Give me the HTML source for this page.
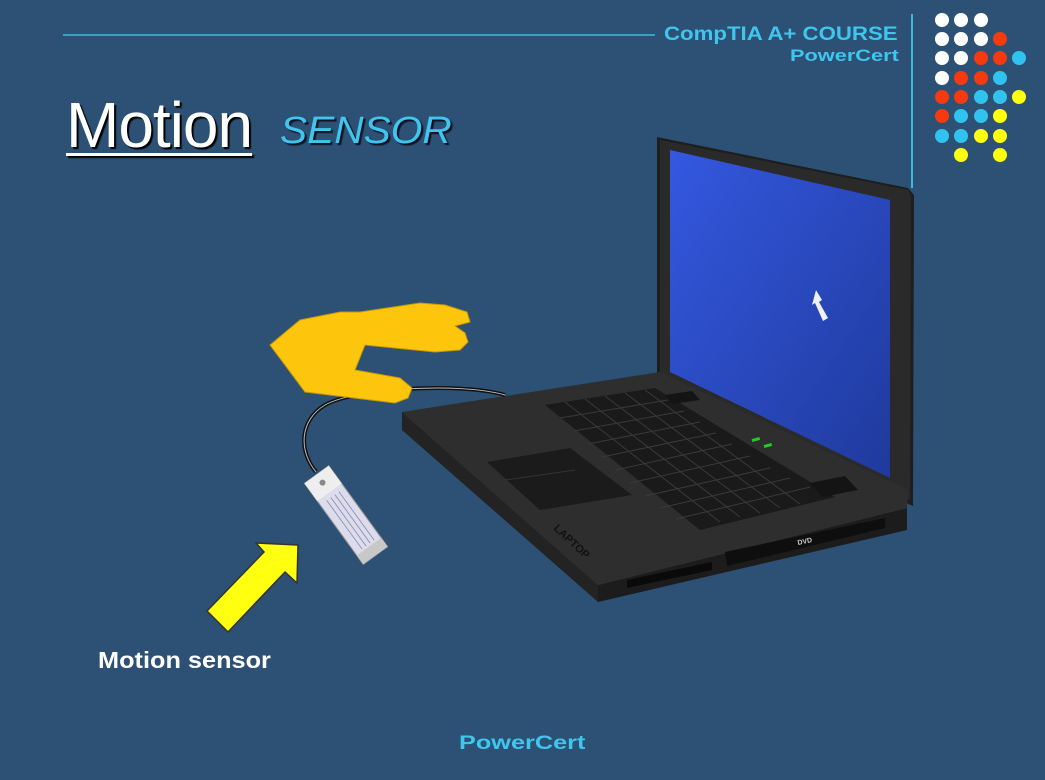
<!DOCTYPE html>
<html><head><meta charset="utf-8"><style>
html,body{margin:0;padding:0;}
body{width:1045px;height:780px;background:#2c5175;overflow:hidden;position:relative;font-family:"Liberation Sans",sans-serif;}
.t{position:absolute;white-space:nowrap;transform-origin:0 0;}
</style></head><body>
<svg width="1045" height="780" style="position:absolute;left:0;top:0">
<line x1="63" y1="35" x2="655" y2="35" stroke="#3fb8e0" stroke-width="1.5"/>
<line x1="912" y1="14" x2="912" y2="188" stroke="#3fb8e0" stroke-width="2"/>
<g>
<circle cx="942" cy="20" r="7" fill="#fff"/><circle cx="961" cy="20" r="7" fill="#fff"/><circle cx="981" cy="20" r="7" fill="#fff"/>
<circle cx="942" cy="39" r="7" fill="#fff"/><circle cx="961" cy="39" r="7" fill="#fff"/><circle cx="981" cy="39" r="7" fill="#fff"/><circle cx="1000" cy="39" r="7" fill="#f53a10"/>
<circle cx="942" cy="58" r="7" fill="#fff"/><circle cx="961" cy="58" r="7" fill="#fff"/><circle cx="981" cy="58" r="7" fill="#f53a10"/><circle cx="1000" cy="58" r="7" fill="#f53a10"/><circle cx="1019" cy="58" r="7" fill="#31c3ef"/>
<circle cx="942" cy="78" r="7" fill="#fff"/><circle cx="961" cy="78" r="7" fill="#f53a10"/><circle cx="981" cy="78" r="7" fill="#f53a10"/><circle cx="1000" cy="78" r="7" fill="#31c3ef"/>
<circle cx="942" cy="97" r="7" fill="#f53a10"/><circle cx="961" cy="97" r="7" fill="#f53a10"/><circle cx="981" cy="97" r="7" fill="#31c3ef"/><circle cx="1000" cy="97" r="7" fill="#31c3ef"/><circle cx="1019" cy="97" r="7" fill="#ffff10"/>
<circle cx="942" cy="116" r="7" fill="#f53a10"/><circle cx="961" cy="116" r="7" fill="#31c3ef"/><circle cx="981" cy="116" r="7" fill="#31c3ef"/><circle cx="1000" cy="116" r="7" fill="#ffff10"/>
<circle cx="942" cy="136" r="7" fill="#31c3ef"/><circle cx="961" cy="136" r="7" fill="#31c3ef"/><circle cx="981" cy="136" r="7" fill="#ffff10"/><circle cx="1000" cy="136" r="7" fill="#ffff10"/>
<circle cx="961" cy="155" r="7" fill="#ffff10"/><circle cx="1000" cy="155" r="7" fill="#ffff10"/>
</g>
<polygon points="657,137 908,188 914,195 913,506 657,392" fill="#1e1e1e"/>
<polygon points="660,140 908,190 911,196 910,500 660,390" fill="#2a2a2a"/>
<defs><linearGradient id="sg" x1="0" y1="0" x2="1" y2="1"><stop offset="0" stop-color="#3458e0"/><stop offset="1" stop-color="#1f3a9c"/></linearGradient></defs>
<polygon points="670,150 890,200 890,478 670,372" fill="url(#sg)"/>
<polygon points="816,290 822,300 819,302 828,318 823,321 815,303 812,305" fill="#f0f0f0"/>
<polygon points="402,412 598,585 598,602 402,430" fill="#232323"/>
<polygon points="598,585 907,508 907,530 598,602" fill="#1c1c1c"/>
<polygon points="402,412 660,372 908,490 907,508 598,585" fill="#2e2e2e"/>
<polygon points="545,405 655,388 835,497 700,530" fill="#1a1a1a"/>
<g stroke="#3a3a3a" stroke-width="1">
<line x1="560" y1="418" x2="668" y2="400"/><line x1="574" y1="431" x2="684" y2="411"/><line x1="588" y1="444" x2="700" y2="422"/><line x1="602" y1="457" x2="716" y2="433"/><line x1="616" y1="470" x2="732" y2="444"/><line x1="630" y1="483" x2="750" y2="456"/><line x1="645" y1="496" x2="770" y2="468"/><line x1="660" y1="508" x2="790" y2="478"/><line x1="676" y1="519" x2="810" y2="487"/>
<line x1="565" y1="402" x2="720" y2="522"/><line x1="585" y1="399" x2="740" y2="517"/><line x1="605" y1="396" x2="760" y2="513"/><line x1="625" y1="393" x2="780" y2="508"/><line x1="645" y1="390" x2="800" y2="504"/>
</g>
<polygon points="487,462 570,448 632,495 540,510" fill="#1b1b1b"/>
<line x1="505" y1="480" x2="575" y2="470" stroke="#333"/>
<polygon points="665,395 692,391 700,400 672,404" fill="#141414"/>
<polygon points="810,483 845,476 858,490 822,497" fill="#141414"/>
<rect x="752" y="438" width="8" height="3" fill="#22cc22" transform="rotate(-15 756 440)"/>
<rect x="764" y="444" width="8" height="3" fill="#22cc22" transform="rotate(-15 768 446)"/>
<polygon points="725,552 885,518 885,528 727,566" fill="#0e0e0e"/>
<polygon points="627,580 712,562 712,570 627,588" fill="#0a0a0a"/>
<text x="798" y="545" font-size="7" fill="#ccc" font-weight="bold" transform="rotate(-12 798 545)">DVD</text>
<text x="553" y="529" font-size="11" font-weight="bold" fill="#111" transform="rotate(43 553 529)">LAPTOP</text>
<path d="M316,472 C298,450 300,420 325,405 C355,388 460,382 505,395" stroke="#111" stroke-width="4" fill="none"/>
<path d="M316,472 C298,450 300,420 325,405 C355,388 460,382 505,395" stroke="#bbb" stroke-width="1" fill="none"/>
<g transform="rotate(-36 346 515)">
<rect x="331" y="465" width="30" height="100" fill="#dcdcec" stroke="#999"/>
<rect x="331" y="465" width="30" height="22" fill="#eee"/>
<circle cx="346" cy="475" r="3" fill="#888"/>
<g stroke="#8888aa" stroke-width="0.8"><line x1="339" y1="492" x2="339" y2="552"/><line x1="344" y1="492" x2="344" y2="552"/><line x1="349" y1="492" x2="349" y2="552"/><line x1="354" y1="492" x2="354" y2="552"/></g>
<rect x="331" y="554" width="30" height="11" fill="#c8c8c8"/>
</g>
<path d="M270,345 L300,320 L340,312 L360,312 L420,303 L445,305 L467,312 L470,322 L455,326 L465,333 L468,342 L460,350 L435,352 L365,345 L355,370 L400,378 L412,388 L408,398 L395,403 L305,392 Z" fill="#fdc50b" stroke="#c89a00" stroke-width="1"/>
<polygon points="298,545 297,583 285,572 228,632 207,611 264,552 256,543" fill="#ffff10" stroke="#333" stroke-width="1.5"/>
</svg>
<div class="t" style="left:664px;top:24px;font-size:19px;font-weight:bold;color:#3fc6ee;transform:scaleX(1.17);">CompTIA A+ COURSE</div>
<div class="t" style="left:790px;top:46px;font-size:17px;font-weight:bold;color:#3fc6ee;transform:scaleX(1.28);">PowerCert</div>
<div class="t" style="left:66px;top:88px;font-size:64px;color:#fff;text-shadow:2px 2px 1px #000;text-decoration:underline;text-decoration-thickness:3px;text-underline-offset:6px;letter-spacing:-1px;">Motion</div>
<div class="t" style="left:280px;top:110px;font-size:38px;font-style:italic;color:#3fc6ee;text-shadow:2px 2px 1px #112;transform:scaleX(1.07);">SENSOR</div>
<div class="t" style="left:98px;top:647px;font-size:23px;font-weight:bold;color:#fff;transform:scaleX(1.1);">Motion sensor</div>
<div class="t" style="left:459px;top:733px;font-size:19px;font-weight:bold;color:#3fc6ee;transform:scaleX(1.33);">PowerCert</div>
</body></html>
